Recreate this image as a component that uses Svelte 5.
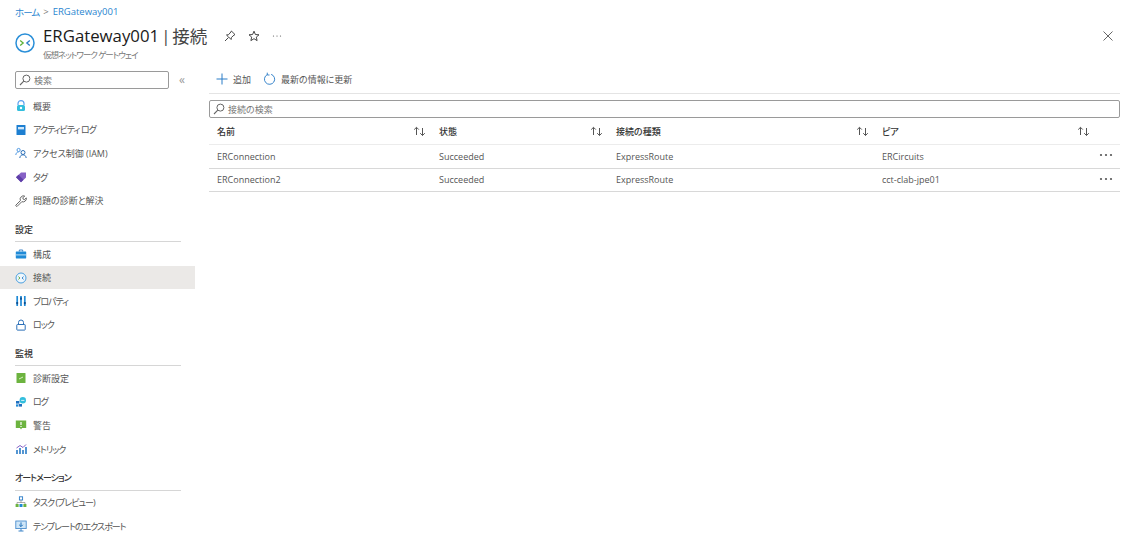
<script>
  const nav = [
    { items: [
      ['overview', '概要'], ['log', 'アクティビティ ログ'], ['iam', 'アクセス制御 (IAM)'], ['tag', 'タグ'], ['wrench', '問題の診断と解決']
    ] },
    { title: '設定', items: [
      ['config', '構成'], ['gw', '接続', true], ['props', 'プロパティ'], ['lock', 'ロック']
    ] },
    { title: '監視', items: [
      ['diag', '診断設定'], ['logs', 'ログ'], ['alert', '警告'], ['metric', 'メトリック']
    ] },
    { title: 'オートメーション', items: [
      ['task', 'タスク (プレビュー)'], ['export', 'テンプレートのエクスポート']
    ] }
  ];

  // labels that are all katakana run tighter, like the original UI font
  const narrow = new Set(['アクティビティ ログ', 'タグ', 'プロパティ', 'ロック', 'ログ', 'メトリック', 'タスク (プレビュー)', 'テンプレートのエクスポート', 'オートメーション']);

  const columns = ['名前', '状態', '接続の種類', 'ピア'];
  const rows = [
    ['ERConnection', 'Succeeded', 'ExpressRoute', 'ERCircuits'],
    ['ERConnection2', 'Succeeded', 'ExpressRoute', 'cct-clab-jpe01']
  ];
</script>

{#snippet search()}
  <svg class="mag" viewBox="0 0 12 12" width="12" height="12"><circle cx="7.4" cy="4.6" r="3.5" fill="none" stroke="#666" stroke-width="1"/><path d="M4.8 7.2 1 11" stroke="#666" stroke-width="1.1" fill="none"/></svg>
{/snippet}

{#snippet sort()}
  <svg class="sort" viewBox="0 0 13 11" width="13" height="11"><path d="M3.5 9V1.5M1.2 3.6l2.3-2.3 2.3 2.3M9.5 2v7.5M7.2 7.2l2.3 2.3 2.3-2.3" fill="none" stroke="#555" stroke-width="1"/></svg>
{/snippet}

{#snippet dots()}
  <svg viewBox="0 0 14 4" width="14" height="4"><circle cx="2" cy="2" r="1.1" fill="#555"/><circle cx="7" cy="2" r="1.1" fill="#555"/><circle cx="12" cy="2" r="1.1" fill="#555"/></svg>
{/snippet}

{#snippet icon(name)}
  <svg viewBox="0 0 12 12" width="12" height="12">
    {#if name === 'overview'}
      <path d="M3 5V3.600a3 3 0 0 1 6 0V5" fill="none" stroke="#5ea0ef" stroke-width="1.2"/>
      <rect x="2" y="5" width="8" height="6" rx="1.5" fill="#32bedd"/><circle cx="6" cy="8" r="1.2" fill="#fff"/>
    {:else if name === 'log'}
      <rect x="1.5" y="1" width="9" height="10" rx=".6" fill="#1d7fd1"/><rect x="3" y="3" width="6" height="2.4" fill="#cfe6f8"/>
    {:else if name === 'iam'}
      <circle cx="3.6" cy="3" r="1.6" fill="none" stroke="#3f8ede" stroke-width=".9"/><path d="M.8 8c.2-2 1.2-3 2.800-3" fill="none" stroke="#3f8ede" stroke-width=".9"/>
      <circle cx="8" cy="5.500" r="2" fill="none" stroke="#2a6fb8" stroke-width="1"/><path d="M4.800 11c.2-2 1.400-3.200 3.200-3.200S11 9 11.200 11" fill="none" stroke="#2a6fb8" stroke-width="1"/>
    {:else if name === 'tag'}
      <path d="M1 6.200 6 1.400h5v5l-5 4.800z" fill="#8661c5"/><path d="M6 11.200 1 6.200 3.500 3.800l5 5z" fill="#5e3fa8"/>
    {:else if name === 'wrench'}
      <path d="M.8 10.200 5.400 5.600a3.400 3.400 0 0 1 .8-3.800 3.400 3.400 0 0 1 3.500-.8L7.800 2.900l.4 1.300 1.300.4 1.800-1.800a3.400 3.400 0 0 1-4.500 3.900L2.200 11.300a1 1 0 0 1-1.400-1.100z" fill="none" stroke="#555" stroke-width=".9"/>
    {:else if name === 'config'}
      <path d="M4.300 3.500V2h3.400v1.500" fill="none" stroke="#3b83c8" stroke-width="1"/><rect x=".8" y="3.400" width="10.400" height="7" rx=".6" fill="#1f8ad6"/><rect x=".8" y="6.400" width="10.400" height="1" fill="#bfe0f5"/>
    {:else if name === 'gw'}
      <circle cx="6" cy="6" r="5" fill="#eef6fc" stroke="#4aa0e0" stroke-width="1"/><path d="M3.400 4.600 5 6 3.400 7.400" fill="none" stroke="#58a83a" stroke-width=".9"/><path d="M8.600 4.600 7 6l1.600 1.400" fill="none" stroke="#2a7cc7" stroke-width=".9"/>
    {:else if name === 'props'}
      <path d="M2.200 1v10" stroke="#1f8ad6" stroke-width="1.700"/><path d="M6 1v10" stroke="#1f8ad6" stroke-width="1.700"/><path d="M9.800 1v10" stroke="#1f8ad6" stroke-width="1.700"/><rect x="1.300" y="7" width="1.800" height="2.200" fill="#0f4f90"/><rect x="5.100" y="2.500" width="1.800" height="2.200" fill="#0f4f90"/><rect x="8.900" y="7" width="1.800" height="2.200" fill="#0f4f90"/>
    {:else if name === 'lock'}
      <path d="M3.500 5.500V3.500a2.500 2.500 0 0 1 5 0v2" fill="none" stroke="#2a6fb8" stroke-width="1"/><rect x="1.800" y="5.500" width="8.400" height="5.600" rx=".6" fill="none" stroke="#2a6fb8" stroke-width="1"/>
    {:else if name === 'diag'}
      <rect x="1.500" y="1" width="9" height="10" rx=".6" fill="#6cb33f"/><path d="M4 7l4-2" stroke="#d8efc4" stroke-width="1"/>
    {:else if name === 'logs'}
      <circle cx="7.800" cy="4.200" r="3.200" fill="#32bedd"/><rect x="1" y="5" width="3.400" height="2.600" fill="#1f70c1"/><rect x="3.600" y="8" width="3.400" height="2.600" fill="#1f70c1"/><rect x="1" y="8.400" width="2" height="2.200" fill="#1f8ad6"/><path d="M6.200 4.400h3.200" stroke="#fff" stroke-width=".8"/>
    {:else if name === 'alert'}
      <path d="M.8 1.500h10.400v7.400H7l-1 1.600-1-1.600H.8z" fill="#6cb33f"/><path d="M6 3v3M6 7v1" stroke="#fff" stroke-width="1.200"/>
    {:else if name === 'metric'}
      <path d="M2 11V7M5 11V5M8 11V7M11 11V4" stroke="#2a7cc7" stroke-width="1.600"/><path d="M1.500 5 5 2.500 8 4.500 11 1.500" fill="none" stroke="#8661c5" stroke-width="1"/>
    {:else if name === 'task'}
      <rect x="4.400" y=".8" width="3.200" height="3.200" fill="none" stroke="#2a7cc7" stroke-width=".9"/><path d="M6 4v3M2 8V6.500h8V8" fill="none" stroke="#888" stroke-width=".7"/>
      <rect x=".6" y="8" width="3" height="3" fill="#6cb33f"/><rect x="4.500" y="8" width="3" height="3" fill="#1f8ad6"/><rect x="8.400" y="8" width="3" height="3" fill="#6cb33f"/>
    {:else if name === 'export'}
      <rect x=".8" y="1" width="10.400" height="7.600" fill="#cfe6f8" stroke="#3b83c8" stroke-width=".8"/><path d="M6 2.400v4M4.200 4.800 6 6.600l1.800-1.800" fill="none" stroke="#1d6fb8" stroke-width="1"/><path d="M6 8.600V11M3.500 11h5" stroke="#3b83c8" stroke-width="1"/>
    {/if}
  </svg>
{/snippet}

<div class="page">
  <nav class="crumbs"><span class="tight">ホーム</span><i>&gt;</i><span>ERGateway001</span></nav>

  <header class="head">
    <svg class="logo" viewBox="0 0 20 20" width="20" height="20">
      <circle cx="10" cy="10" r="9" fill="#fff" stroke="#2a8fd8" stroke-width="1.500"/>
      <path d="M5.200 7.400 8.200 10l-3 2.600" fill="none" stroke="#5cb135" stroke-width="1.300"/>
      <path d="M14.800 7.400 11.800 10l3 2.600" fill="none" stroke="#2a7cc7" stroke-width="1.300"/>
    </svg>
    <div class="titles">
      <h1>ERGateway001<span class="sep">|</span><span class="page-name">接続</span></h1>
      <p class="tight">仮想ネットワーク ゲートウェイ</p>
    </div>
    <div class="actions">
      <svg viewBox="0 0 12 12" width="12" height="12"><path d="M7.400 1 11 4.600l-1 .5-2.600 2.400-.3 2L5.600 8 4 6.400 2.500 5l2-.3L6.900 2z M4.500 7.500 1 11" fill="none" stroke="#333" stroke-width=".9"/></svg>
      <svg viewBox="0 0 12 12" width="12" height="12"><path d="M6 1.200 7.400 4.500l3.600.3-2.700 2.300.8 3.500L6 8.700l-3.100 1.900.8-3.500L1 4.800l3.600-.3z" fill="none" stroke="#333" stroke-width=".9"/></svg>
      <svg viewBox="0 0 10 2" width="10" height="2"><circle cx="1.500" cy="1" r=".6" fill="#555"/><circle cx="5" cy="1" r=".6" fill="#555"/><circle cx="8.500" cy="1" r=".6" fill="#555"/></svg>
    </div>
    <svg class="close" viewBox="0 0 10 10" width="10" height="10"><path d="M.5.500l9 9M9.500.500l-9 9" stroke="#555" stroke-width=".9"/></svg>
  </header>

  <div class="body">
    <aside class="side">
      <div class="side-top">
        <div class="box side-search">{@render search()}<span>検索</span></div>
        <span class="collapse">«</span>
      </div>
      {#each nav as group}
        {#if group.title}
          <h2 class:tight={narrow.has(group.title)}>{group.title}</h2>
        {/if}
        {#each group.items as [name, label, active]}
          <div class="item" class:active>{@render icon(name)}<span class:tight={narrow.has(label)}>{label}</span></div>
        {/each}
      {/each}
    </aside>

    <main class="main">
      <div class="toolbar">
        <span class="tool">
          <svg viewBox="0 0 12 12" width="12" height="12"><path d="M6 .5v11M.5 6h11" stroke="#2a7cc7" stroke-width="1"/></svg>
          追加
        </span>
        <span class="tool">
          <svg viewBox="0 0 14 14" width="13" height="14"><path d="M4.600 2.300a5.500 5.500 0 1 0 4.200-.3" fill="none" stroke="#2a7cc7" stroke-width="1"/><path d="M4.600 .2v2.500H7" fill="none" stroke="#2a7cc7" stroke-width="1"/></svg>
          最新の情報に更新
        </span>
      </div>
      <div class="box main-search">{@render search()}<span>接続の検索</span></div>

      <div class="row head-row">
        {#each columns as col}
          <div class="cell"><b>{col}</b>{@render sort()}</div>
        {/each}
        <div></div>
      </div>
      {#each rows as r}
        <div class="row">
          {#each r as v}
            <div class="cell">{v}</div>
          {/each}
          <div class="more">{@render dots()}</div>
        </div>
      {/each}
    </main>
  </div>
</div>

<style>
  :global(body) {
    background: #fff;
    overflow: hidden;
  }
  .page {
    width: 1126px;
    height: 542px;
    overflow: hidden;
    font-family: "Open Sans", "Noto Sans CJK JP", sans-serif;
    font-feature-settings: "palt";
    font-size: 9px;
    color: #555;
  }
  .tight {
    letter-spacing: -1px;
  }
  .crumbs {
    height: 19px;
    padding: 4px 0 0 15px;
    box-sizing: border-box;
    display: flex;
    align-items: center;
    gap: 4px;
    font-size: 9.500px;
    color: #2a86d0;
  }
  .crumbs i {
    font-style: normal;
    color: #777;
  }
  .head {
    height: 44px;
    display: flex;
    align-items: center;
    padding: 0 13px 0 15px;
  }
  .logo {
    margin-top: 3px;
  }
  .titles {
    margin-left: 8px;
    position: relative;
    top: 1px;
  }
  h1 {
    margin: 0;
    font-size: 16.800px;
    line-height: 24px;
    font-weight: 500;
    color: #1a1a1a;
    white-space: nowrap;
    display: flex;
    align-items: center;
  }
  .sep {
    font-weight: 400;
    margin: 0 2px;
    color: #444;
  }
  .page-name {
    font-size: 17.500px;
    font-weight: 400;
    color: #444;
  }
  .titles p {
    margin: 1px 0 0;
    font-size: 8.500px;
    line-height: 12px;
    color: #777;
  }
  .actions {
    display: flex;
    align-items: center;
    gap: 12px;
    margin: -11px 0 0 17px;
  }
  .close {
    margin: -10px 0 0 auto;
  }
  .body {
    display: flex;
  }
  .side {
    width: 195px;
    flex: none;
  }
  .side-top {
    display: flex;
    align-items: center;
    padding: 8px 0 5.500px 15px;
    gap: 10px;
  }
  .box {
    display: flex;
    align-items: center;
    gap: 3px;
    box-sizing: border-box;
    border: 1px solid #9a9a9a;
    border-radius: 2px;
    padding-left: 3px;
    color: #777;
  }
  .side-search {
    width: 154px;
    height: 18px;
  }
  .collapse {
    color: #999;
    font-size: 12px;
    line-height: 12px;
  }
  .item {
    height: 23.600px;
    display: flex;
    align-items: center;
    gap: 6px;
    padding-left: 15px;
  }
  .item.active {
    background: #ebe9e7;
  }
  h2 {
    margin: 6.300px 14px 0 15px;
    height: 23.500px;
    box-sizing: border-box;
    padding-top: 4px;
    font-size: 9px;
    line-height: 14px;
    font-weight: 500;
    color: #333;
    border-bottom: 1px solid #d6d6d6;
  }
  .main {
    flex: 1;
    padding: 0 6px 0 14px;
    min-width: 0;
  }
  .toolbar {
    display: flex;
    gap: 12px;
    height: 31px;
    padding: 2px 0 0 7px;
    box-sizing: border-box;
    align-items: center;
    border-bottom: 1px solid #e4e4e4;
  }
  .tool {
    display: flex;
    align-items: center;
    gap: 5px;
  }
  .main-search {
    height: 18px;
    margin-top: 6px;
  }
  .row {
    display: grid;
    grid-template-columns: 222px 177px 266px 212px 1fr;
    height: 23.600px;
    align-items: center;
    padding-left: 8px;
    box-sizing: border-box;
    border-bottom: 1px solid #d8d8d8;
  }
  .head-row {
    height: 27px;
    padding-top: 1px;
    border-bottom-color: #ececec;
  }
  .cell {
    display: flex;
    align-items: center;
    justify-content: space-between;
    padding-right: 13px;
  }
  .head-row .cell:nth-child(4) {
    padding-right: 4px;
  }
  .cell b {
    font-weight: 500;
    color: #333;
  }
  .more {
    display: flex;
    justify-content: flex-end;
    padding: 0 7px 2px 0;
  }
  svg {
    flex: none;
    display: block;
  }
</style>
